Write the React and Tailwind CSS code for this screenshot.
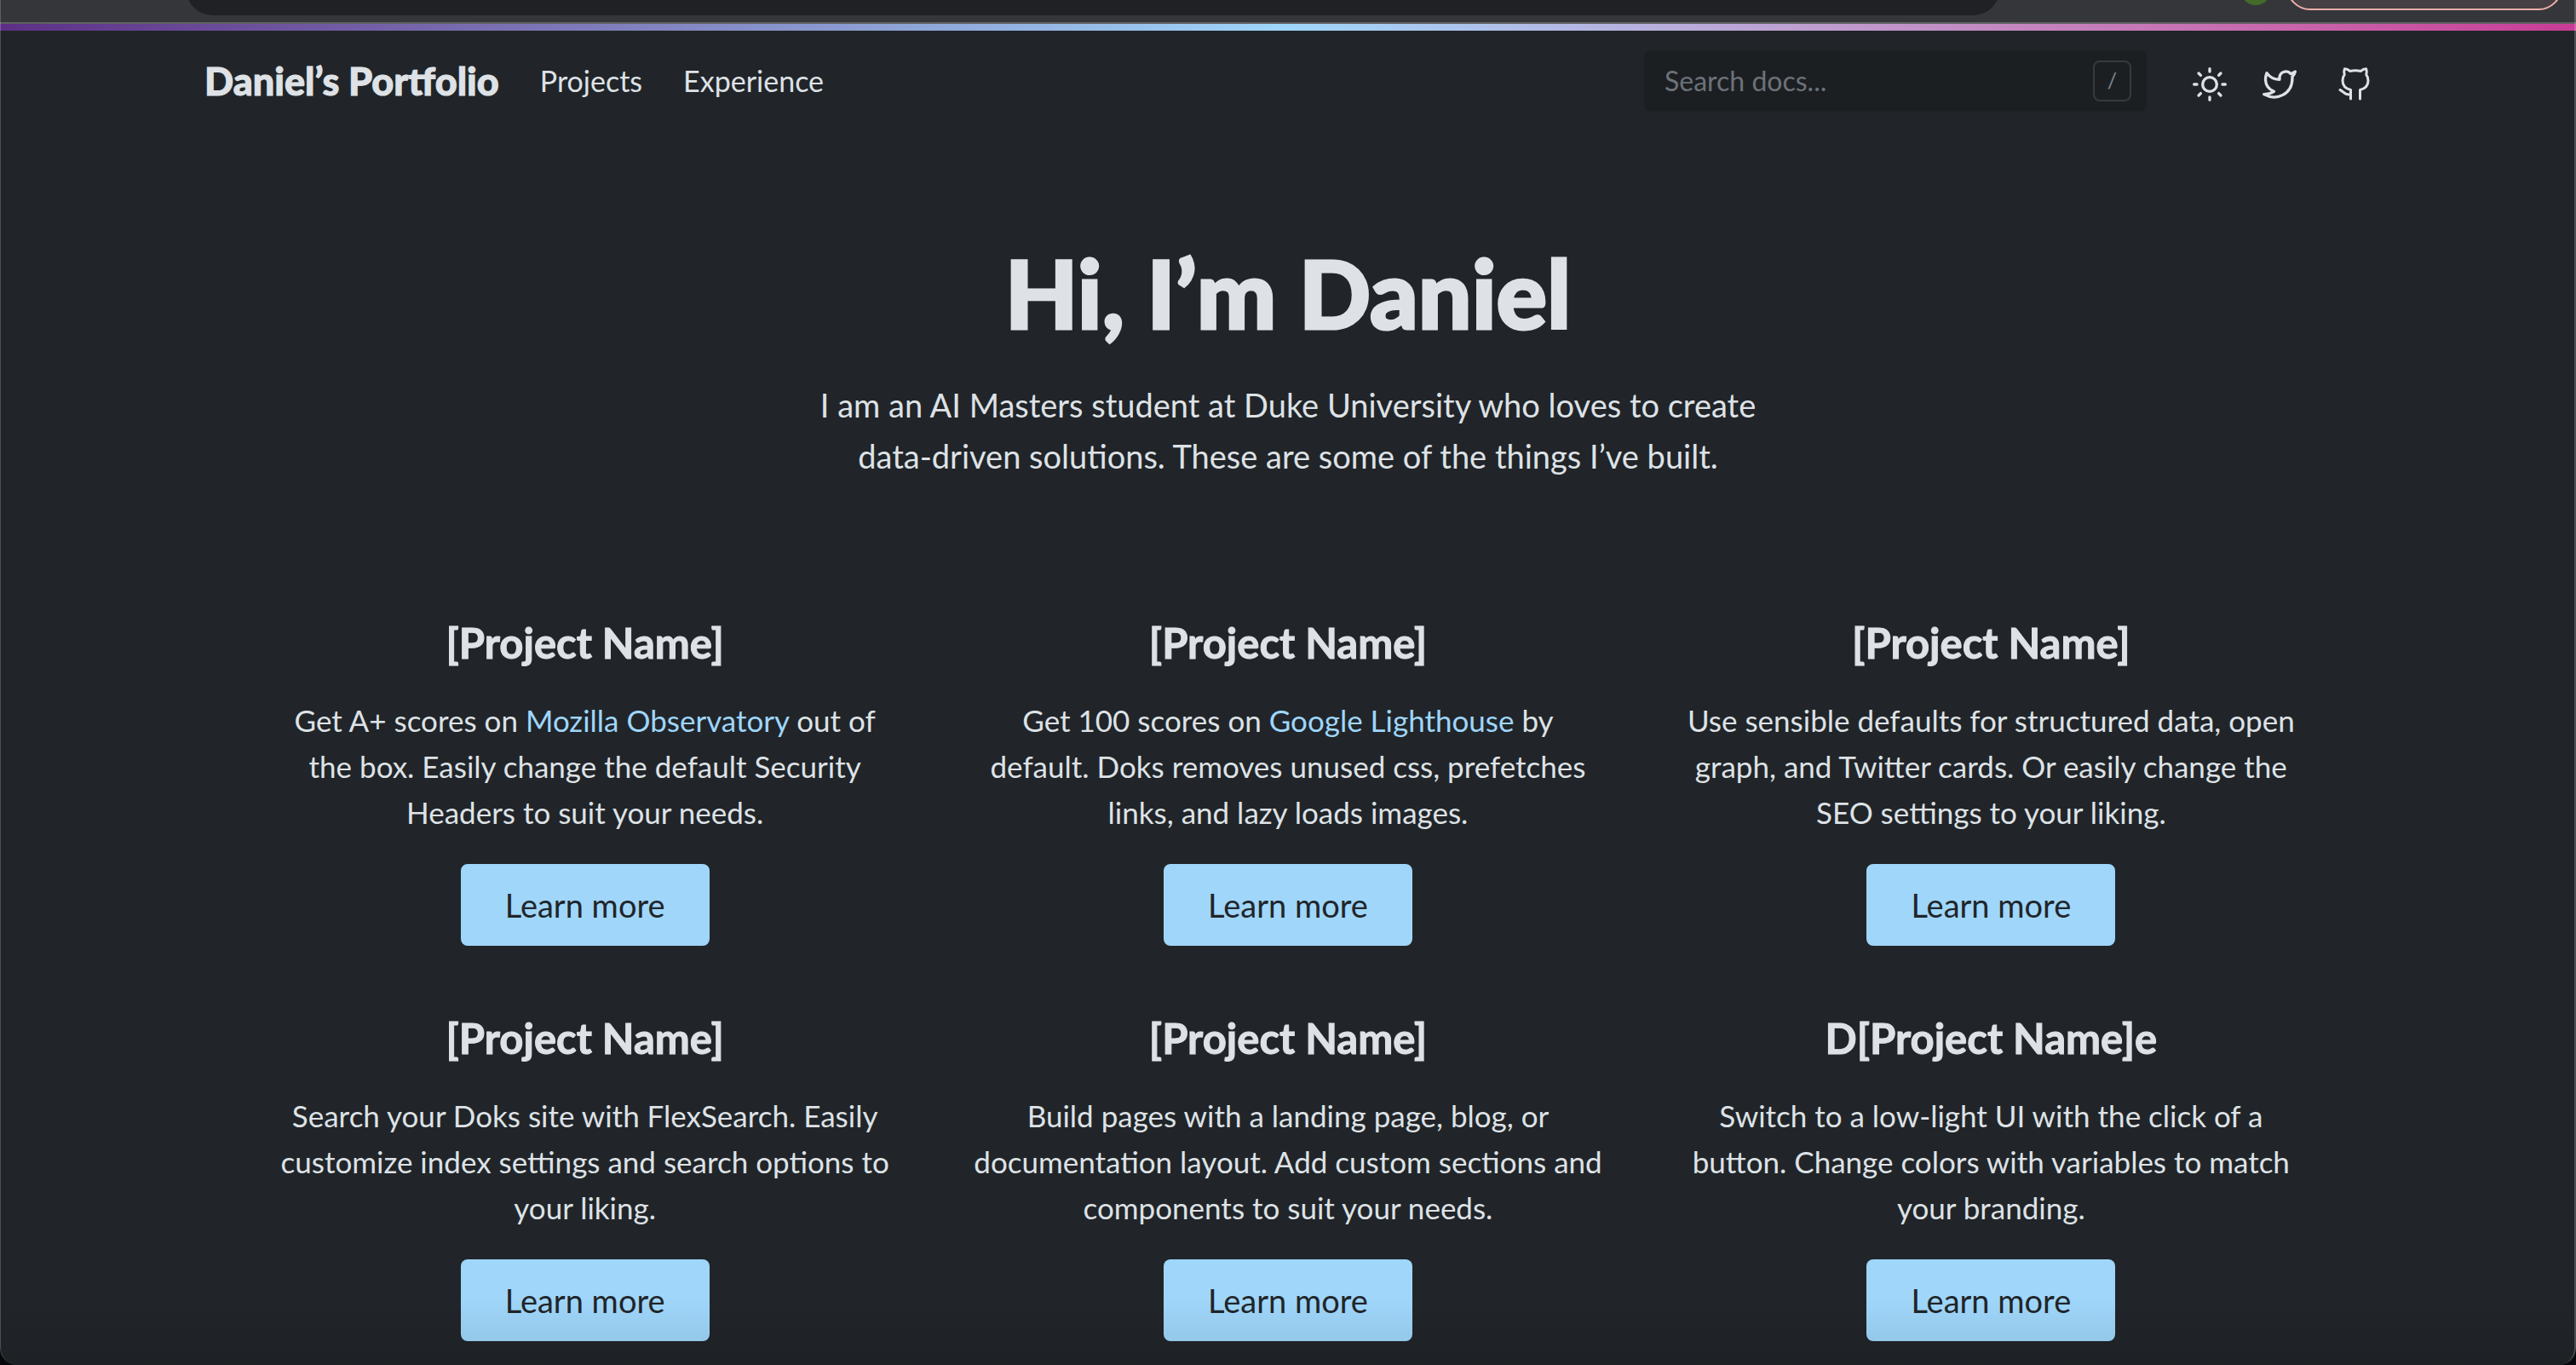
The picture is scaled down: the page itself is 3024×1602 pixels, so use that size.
const projects = [
  {
    title: "[Project Name]",
    lines: [
      <>Get A+ scores on <a href="#observatory" className="text-[#9fd6fa]">Mozilla Observatory</a> out of</>,
      "the box. Easily change the default Security",
      "Headers to suit your needs.",
    ],
  },
  {
    title: "[Project Name]",
    lines: [
      <>Get 100 scores on <a href="#lighthouse" className="text-[#9fd6fa]">Google Lighthouse</a> by</>,
      "default. Doks removes unused css, prefetches",
      "links, and lazy loads images.",
    ],
  },
  {
    title: "[Project Name]",
    lines: [
      "Use sensible defaults for structured data, open",
      "graph, and Twitter cards. Or easily change the",
      "SEO settings to your liking.",
    ],
  },
  {
    title: "[Project Name]",
    lines: [
      "Search your Doks site with FlexSearch. Easily",
      "customize index settings and search options to",
      "your liking.",
    ],
  },
  {
    title: "[Project Name]",
    lines: [
      "Build pages with a landing page, blog, or",
      "documentation layout. Add custom sections and",
      "components to suit your needs.",
    ],
  },
  {
    title: "D[Project Name]e",
    lines: [
      "Switch to a low-light UI with the click of a",
      "button. Change colors with variables to match",
      "your branding.",
    ],
  },
];

function Icon({ children, viewBox = "0 0 24 24", strokeWidth = 2 }) {
  return (
    <svg viewBox={viewBox} className="size-10" fill="none" stroke="currentColor" strokeWidth={strokeWidth} strokeLinecap="round" strokeLinejoin="round" aria-hidden="true">
      {children}
    </svg>
  );
}

function BrowserEdge() {
  return (
    <div className="relative h-7 overflow-hidden border-b-2 border-[#5f6062] bg-[#35363a]">
      <div className="absolute left-[218px] right-[676px] bottom-2 h-16 rounded-[36px] bg-[#202124]" />
      <div className="absolute right-[358px] bottom-5 size-9 rounded-full bg-[#446b29]" />
      <div className="absolute right-[16px] bottom-[14px] h-14 w-[324px] rounded-[28px] border-2 border-[#f1b0ab] bg-[#463f43]" />
    </div>
  );
}

function Header() {
  return (
    <header className="flex items-center px-60 pt-[23px]">
      <a href="#home" className="text-[45px] leading-[60px] font-black [-webkit-text-stroke:1px]">Daniel’s Portfolio</a>
      <nav className="ml-12 flex gap-12 text-[34px] leading-[60px]">
        <a href="#projects">Projects</a>
        <a href="#experience">Experience</a>
      </nav>
      <div className="ml-auto flex h-[72px] w-[590px] items-center rounded-lg bg-[#1c1f22] pl-6 pr-[18px]">
        <input type="search" aria-label="Search docs" placeholder="Search docs..." className="min-w-0 flex-1 bg-transparent text-[32px] outline-none placeholder:text-[#6c7279]" />
        <kbd className="flex h-12 w-[45px] items-center justify-center rounded-lg border-2 border-[#363a3e] font-['Lato',sans-serif] text-[25px] text-[#7d8289]">/</kbd>
      </div>
      <div className="ml-[54px] flex items-center pt-2">
        <button type="button" aria-label="Toggle color mode">
          <Icon>
            <circle cx="12" cy="12" r="5" />
            <path d="M12 1v2M12 21v2M4.22 4.22l1.42 1.42M18.36 18.36l1.42 1.42M1 12h2M21 12h2M4.22 19.78l1.42-1.42M18.36 5.64l1.42-1.42" />
          </Icon>
        </button>
        <a href="#twitter" aria-label="Twitter" className="ml-[42px]">
          <Icon>
            <path d="M23 3a10.9 10.9 0 0 1-3.14 1.53 4.48 4.48 0 0 0-7.86 3v1A10.66 10.66 0 0 1 3 4s-4 9 5 13a11.64 11.64 0 0 1-7 2c9 5 20 0 20-11.5a4.5 4.5 0 0 0-.08-.83A7.72 7.72 0 0 0 23 3z" />
          </Icon>
        </a>
        <a href="#github" aria-label="GitHub" className="ml-12">
          <Icon viewBox="0 0 40 40" strokeWidth={3}>
            <path d="M15.5 37V26.5C9.5 25 6 21.5 6 15.5c0-2.800.8-5 2.200-6.800C7.400 6.500 7.500 4 8.400 1.700c2.300 0 4.200.9 6.100 2.700 4.300-.7 8.700-.7 13 0 1.900-1.800 3.800-2.700 6.100-2.700.9 2.300 1 4.800.2 7 1.400 1.800 2.200 4 2.200 6.800 0 6-3.500 9.500-9.500 11V37M3 26.500c4 1.500 5 6.500 12.500 5.500" />
          </Icon>
        </a>
      </div>
    </header>
  );
}

function ProjectCard({ title, lines }) {
  return (
    <article className="flex flex-col items-center">
      <h2 className="text-[49px] leading-[60px] font-bold [-webkit-text-stroke:1px]">{title}</h2>
      <p className="mt-[34px] text-[35px] leading-[54px]">
        {lines.map((line, i) => (
          <span key={i} className="block whitespace-nowrap">{line}</span>
        ))}
      </p>
      <a href="#project" className="mt-[34px] flex h-24 items-center rounded-lg bg-[#9fd6fa] px-[52px] text-[38px] text-[#212529]">Learn more</a>
    </article>
  );
}

export default function App() {
  return (
    <div className="relative min-h-screen bg-[#08080a] font-['Lato',sans-serif] text-[#dee2e6]">
      <div className="relative flex min-h-screen flex-col overflow-hidden rounded-b-[20px] bg-[#212529]">
        <BrowserEdge />
        <div className="h-2 bg-linear-to-r from-[#5d2f86] via-[#9fd6fa] to-[#c83a96]" />
        <Header />
        <main className="pb-7">
          <section className="mt-[146px] text-center">
            <h1 className="text-[111px] leading-[132px] font-black [-webkit-text-stroke:3px]">Hi, I’m Daniel</h1>
            <p className="mt-9 text-[38px] leading-[60px]">
              I am an AI Masters student at Duke University who loves to create
              <br />
              data-driven solutions. These are some of the things I’ve built.
            </p>
          </section>
          <section className="mt-[159px] grid grid-cols-3 gap-y-[78px] px-[274px] text-center">
            {projects.map((project, i) => (
              <ProjectCard key={i} {...project} />
            ))}
          </section>
        </main>
        <div className="pointer-events-none absolute inset-x-0 bottom-0 h-20 bg-linear-to-b from-transparent to-black/10" />
        <div className="pointer-events-none absolute inset-0 rounded-b-[20px] border-r-2 border-l border-white/20" />
      </div>
    </div>
  );
}
